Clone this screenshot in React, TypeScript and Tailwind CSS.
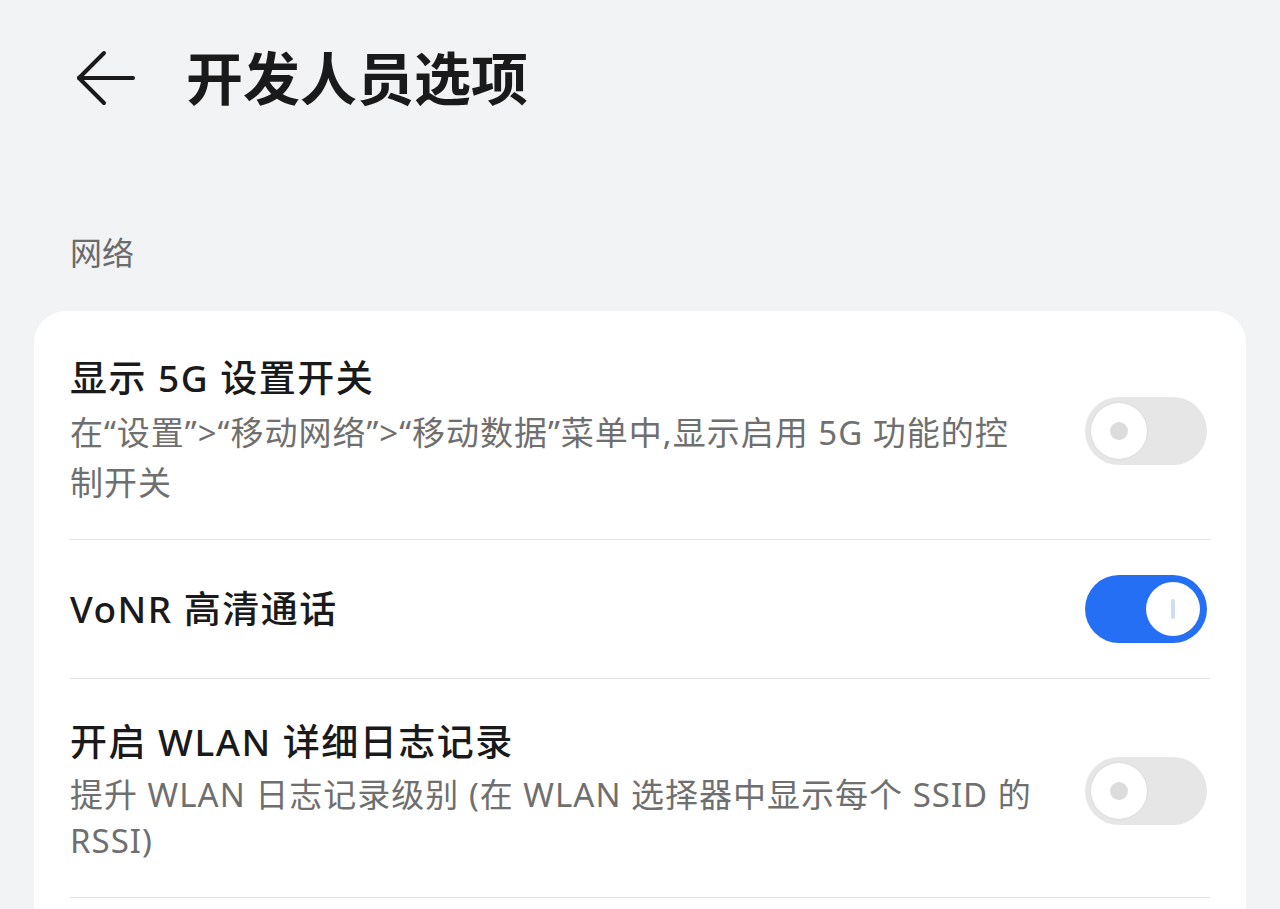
const font = { fontFamily: '"Noto Sans", "Noto Sans CJK SC", sans-serif' };

type Row = {
  title: string;
  desc?: string;
  on: boolean;
  pad: string;
  lead?: string;
};

const rows: Row[] = [
  {
    title: "显示 5G 设置开关",
    desc: "在“设置”>“移动网络”>“移动数据”菜单中,显示启用 5G 功能的控制开关",
    on: false,
    pad: "pt-[43px] pb-[31px]",
    lead: "leading-[50px]",
  },
  { title: "VoNR 高清通话", on: true, pad: "py-[35px]" },
  {
    title: "开启 WLAN 详细日志记录",
    desc: "提升 WLAN 日志记录级别 (在 WLAN 选择器中显示每个 SSID 的 RSSI)",
    on: false,
    pad: "pt-[39px] pb-[33px]",
    lead: "leading-[46px]",
  },
];

function Toggle({ on }: { on: boolean }) {
  if (on) {
    return (
      <div className="mr-[3px] flex h-[68px] w-[122px] shrink-0 items-center justify-end rounded-full bg-[#256ff4] pr-[7px]">
        <div className="flex h-[54px] w-[54px] items-center justify-center rounded-full bg-white">
          <div className="h-[20px] w-[4px] rounded-full bg-[#cfdcf7]" />
        </div>
      </div>
    );
  }
  return (
    <div className="mr-[3px] flex h-[68px] w-[122px] shrink-0 items-center rounded-full bg-[#e6e6e6] pl-[6px]">
      <div className="flex h-[56px] w-[56px] items-center justify-center rounded-full bg-white shadow-[0_0_2px_rgba(0,0,0,0.12)]">
        <div className="h-[18px] w-[18px] rounded-full bg-[#dcdcdc]" />
      </div>
    </div>
  );
}

export default function App() {
  return (
    <div className="h-[909px] overflow-hidden bg-[#f1f3f5] text-[#1a1a1a]" style={font}>
      <header className="flex h-[156px] items-center">
        <svg
          className="ml-[76px]"
          width="60"
          height="56"
          viewBox="0 0 60 56"
          fill="none"
          stroke="#1a1a1a"
          strokeWidth="4"
          strokeLinecap="round"
          strokeLinejoin="round"
        >
          <path d="M3 28H57" />
          <path d="M28 3L3 28L28 53" />
        </svg>
        <h1 className="ml-[50px] text-[57px] font-bold leading-none">开发人员选项</h1>
      </header>

      <div className="mt-[73px] px-[70px] text-[32px] leading-[48px] text-[#6b6b6b]">网络</div>

      <div className="mx-[34px] mt-[34px] rounded-t-[32px] bg-white px-[36px] pb-[80px]">
        {rows.map((row) => (
          <div
            key={row.title}
            className={`flex items-center justify-between border-b border-[#e3e3e3] ${row.pad}`}
          >
            <div className="w-[962px]">
              <div className="text-[37px] font-medium leading-[48px] tracking-[1.5px]">{row.title}</div>
              {row.desc && (
                <div className={`mt-[6px] text-[33px] tracking-[1px] text-[#6f6f6f] ${row.lead}`}>{row.desc}</div>
              )}
            </div>
            <Toggle on={row.on} />
          </div>
        ))}
      </div>
    </div>
  );
}
